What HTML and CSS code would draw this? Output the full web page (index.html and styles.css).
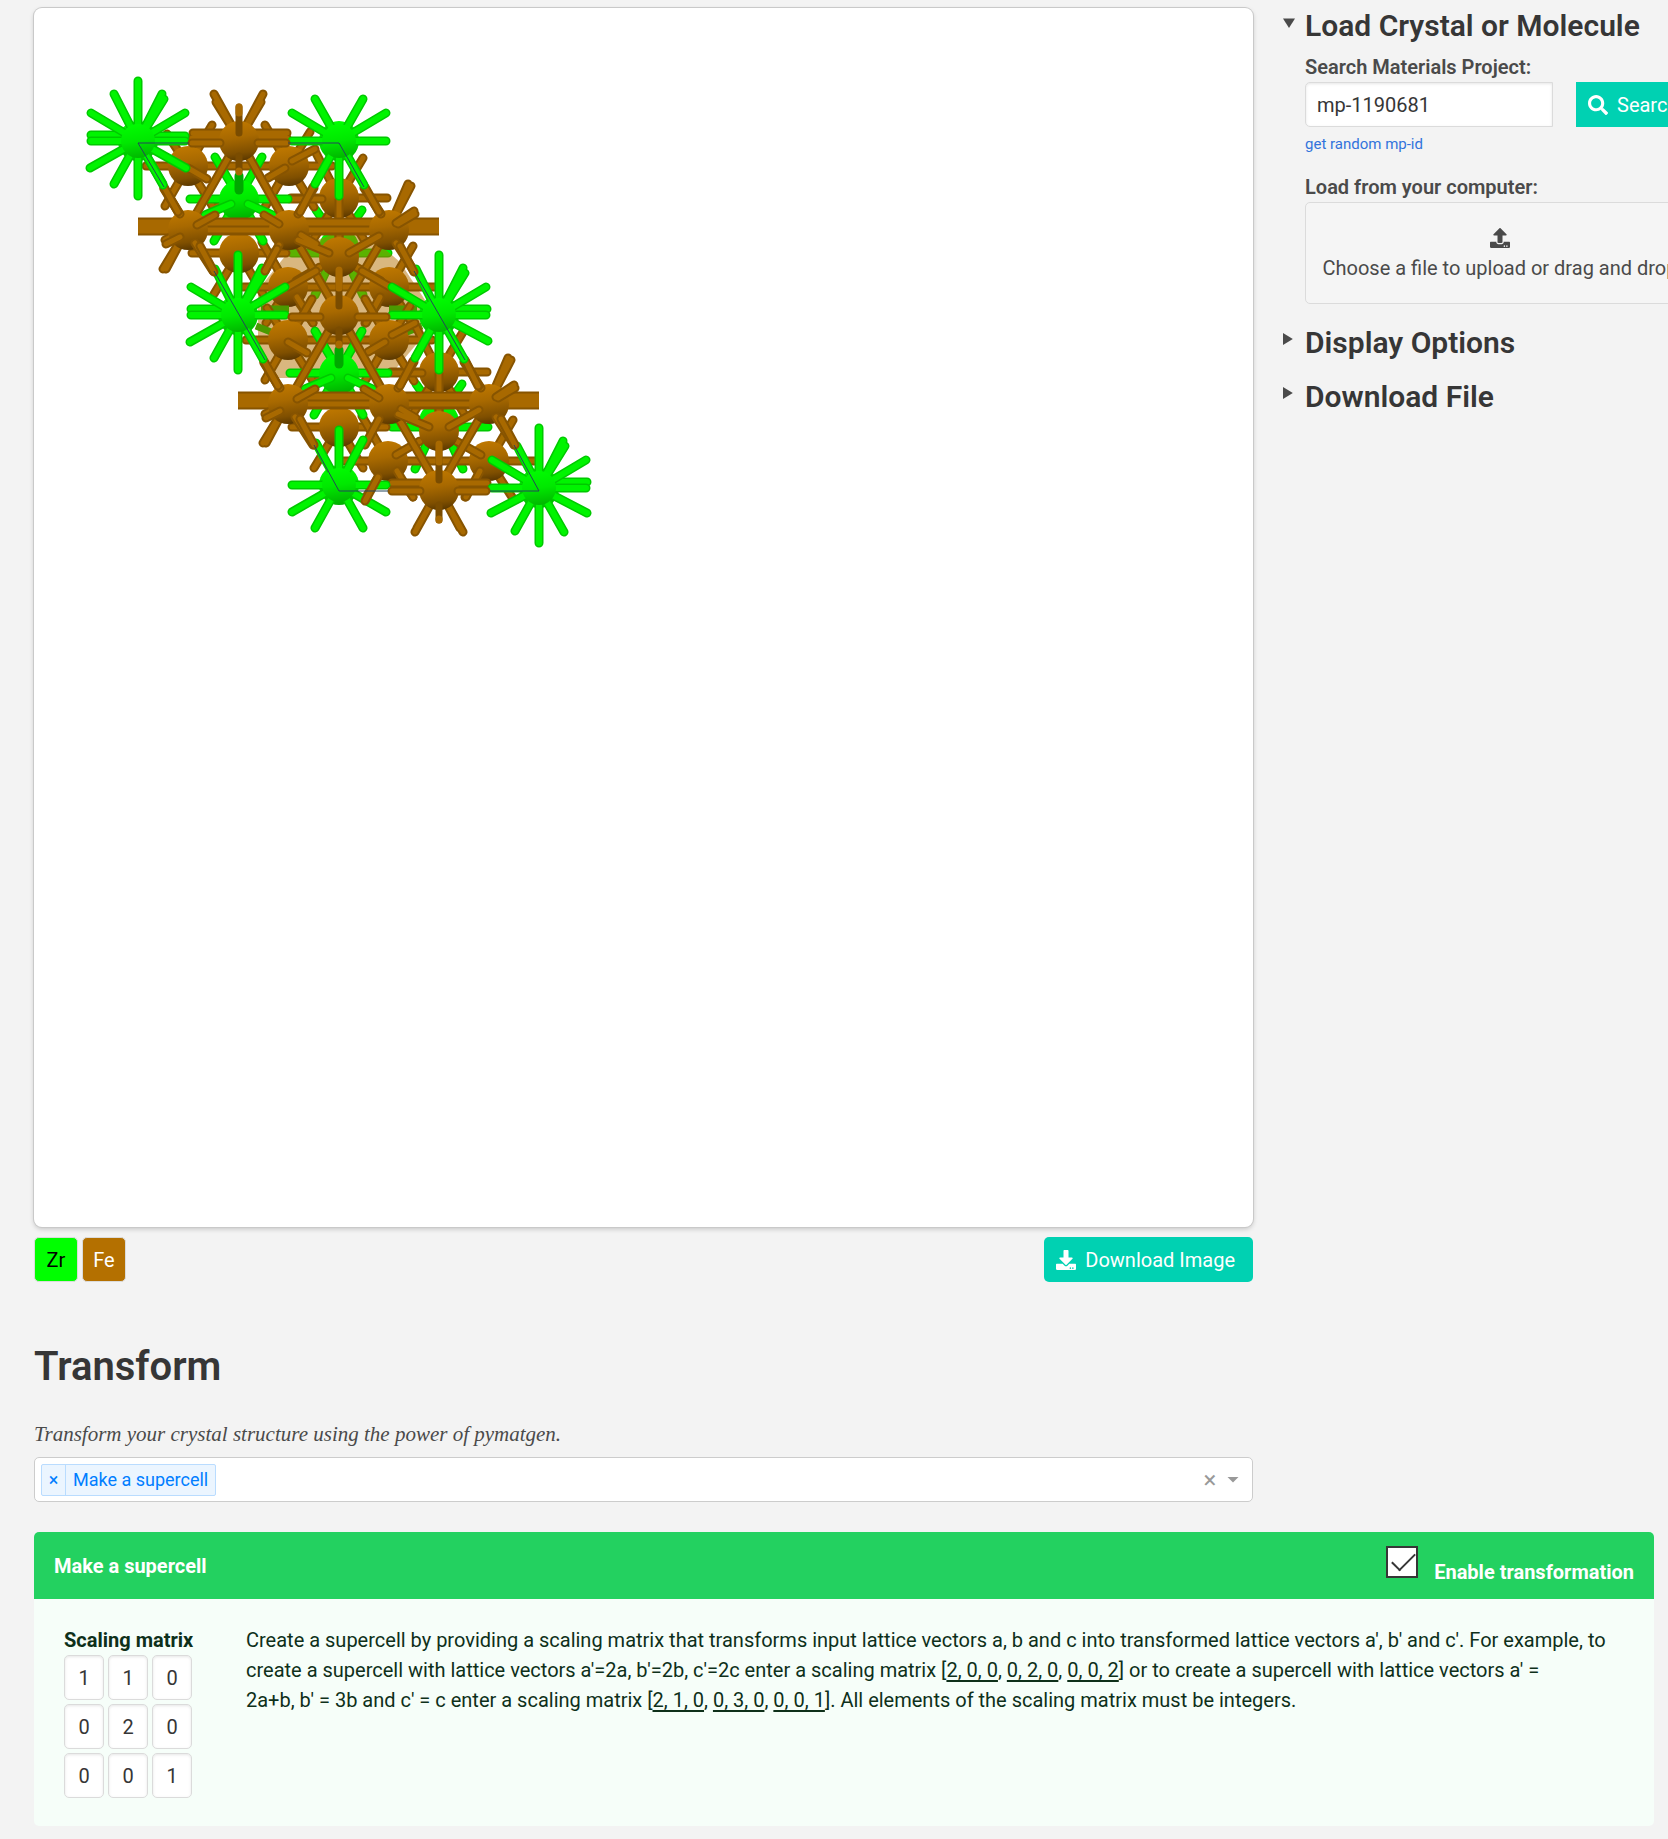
FILE: index.html
```html
<!DOCTYPE html>
<html lang="en">
<head>
<meta charset="utf-8">
<title>Crystal Toolkit</title>
<link rel="stylesheet" href="styles.css">
</head>
<body>
<main class="page">
  <div class="top">
    <section class="primary">
      <div class="viewer">
        <svg class="scene" viewBox="34 8 1219 1219" role="img" aria-label="Crystal structure of a Zr Fe supercell">
          <defs>
            <linearGradient id="feFill" gradientUnits="userSpaceOnUse" x1="-3" y1="-20" x2="3" y2="20">
              <stop offset="0" stop-color="#bf7800"/><stop offset="0.4" stop-color="#a86900"/><stop offset="0.8" stop-color="#7f4f00"/><stop offset="1" stop-color="#593700"/>
            </linearGradient>
            <linearGradient id="zrFill" gradientUnits="userSpaceOnUse" x1="-3" y1="-20" x2="3" y2="20">
              <stop offset="0" stop-color="#00ff00"/><stop offset="0.5" stop-color="#00e800"/><stop offset="1" stop-color="#00ae00"/>
            </linearGradient>
            <circle id="fe" r="20" fill="url(#feFill)"/>
            <circle id="zr" r="20" fill="url(#zrFill)"/>
            <circle id="zrCore" r="17" fill="url(#zrFill)"/>

            <!-- rear layer -->
            <path id="hiddenZr" d="M292 253H388M339 243L316 210M339 243L362 210M339 243L315 295M339 243L363 295"/>
            <path id="rearFe" d="M146 166H332M188 166L212 125M188 166L167 134M188 166L165 206M188 166L213 207M289 166L265 125M289 166L310 132M289 166L265 207M289 166L314 207M339 198H387M339 198H291M339 198L315 151M339 198L363 158M339 198L311 243M339 198L366 243M339 198V238M239 197L213 208M192 253H286M239 253V215M239 253L214 294M239 253L263 294"/>
            <path id="lowerFe" d="M243 287H436M288 287L266 323M288 287L313 323M389 287L365 323M389 287L412 323M288 287L262 242M389 287L413 246"/>
            <path id="lowerStubs" d="M296 281L320 267M381 281L356 267M297 297L313 323M380 297L366 323"/>
            <path id="topStubs" d="M292 161L315 149M285 168L268 178"/>
            <path id="midZr" d="M190 199H288M239 197L215 157M239 197L262 157M239 197L214 241M239 197L263 241"/>
            <path id="midZrFront" d="M205 215L231 204M275 216L248 204"/>
            <path id="midFe" d="M339 200V250M290 199H322"/>

            <!-- front layer -->
            <path id="frontBack" stroke-linecap="butt" d="M138 222H439M138 227H439M138 231H439"/>
            <path id="frontFe" d="M188 228L164 189M188 228L166 269M188 228L163 269M188 228L165 240M239 139L188 228M239 139L289 228M289 228L339 314M389 228L339 314M389 228L411 186M389 228L408 184"/>
            <path id="frontStubs" d="M197 225L215 215M279 224L264 215M301 235L316 244M298 240L329 253M379 236L349 253M180 237L166 244M398 224L415 214M396 223L414 211M195 243L213 271M396 243L414 271M164 188L180 214M364 188L381 214M314 188L298 214M265 271L279 245"/>
            <path id="row" d="M204 230H272M305 230H373"/>

            <!-- arms with an iron-coloured far half -->
            <path id="links" d="M164 187L178 212M365 187L379 212M313 187L300 212M188 168L207 179"/>

            <path id="topFe" d="M239 139L214 94M239 139L216 102M239 139L263 94M239 139L261 102M193 133H287M192 138H287"/>
            <path id="feAxis" d="M-47 0H-19M19 0H47"/>
            <path id="starUp" d="M0 -60V0M0 0L24 -47M0 0L26 -42"/>
            <path id="starArms" d="M0 0L-47 -28M0 0L47 -28M0 0H-47M0 0H47"/>
            <path id="starDown" d="M0 0V55M0 0L-24 43M0 0L25 44"/>
          </defs>

          <g id="cell">
            <use href="#hiddenZr" class="zr-rod"/><use href="#hiddenZr" class="zr-lit"/>
            <use href="#zr" x="339" y="248"/>
          </g>
          <path class="slab" d="M339 232L372 238L400 262L425 300L420 340L388 378H274L258 340L258 290L290 250Z"/>
          <g id="cellBody">
            <use href="#rearFe" class="fe-rod"/><use href="#rearFe" class="fe-lit"/>
            <use href="#fe" x="188" y="166"/><use href="#fe" x="289" y="166"/>
            <use href="#fe" x="339" y="198"/><use href="#fe" x="239" y="253"/>
            <use href="#lowerFe" class="fe-rod"/><use href="#lowerFe" class="fe-lit"/>
            <use href="#fe" x="288" y="287"/><use href="#fe" x="389" y="287"/>
            <use href="#lowerStubs" class="fe-rod"/><use href="#lowerStubs" class="fe-lit"/>
            <use href="#topStubs" class="fe-rod"/><use href="#topStubs" class="fe-lit"/>
            <use href="#midFe" class="fe-rod"/><use href="#midFe" class="fe-lit"/>
            <use href="#midZr" class="zr-rod"/><use href="#midZr" class="zr-lit"/>
            <use href="#zr" x="239" y="200"/>
            <use href="#midZrFront" class="zr-rod"/><use href="#midZrFront" class="zr-lit"/>
            <use href="#frontBack" class="fe-rod"/><use href="#frontBack" class="fe-lit"/>
            <use href="#fe" x="339" y="257"/>
            <use href="#frontFe" class="fe-rod"/><use href="#frontFe" class="fe-lit"/>
            <use href="#row" class="fe-rod"/><use href="#row" class="fe-lit"/>
            <use href="#fe" x="188" y="230"/><use href="#fe" x="289" y="230"/><use href="#fe" x="389" y="230"/>
            <use href="#frontStubs" class="fe-rod"/><use href="#frontStubs" class="fe-lit"/>
            <path class="zr-deep" d="M239 176V190"/>
          </g>
          <path class="zr-dim" d="M256 326L286 338M422 326L392 338M261 309H289M417 309H389"/>

          <!-- second cell, one lattice vector down -->
          <g transform="translate(100 174)">
            <use href="#cell"/>
            <use href="#cellBody"/>
          </g>

          <!-- top row -->
          <use href="#topFe" class="fe-rod"/><use href="#topFe" class="fe-lit"/>
          <use href="#fe" x="239" y="141"/>
          <path class="fe-deep" d="M239 107V133M239 156V171"/>
          <path class="fe-tip" d="M239 107V113M239 171V172"/>
          <use href="#links" class="fe-rod"/><use href="#links" class="fe-lit"/>

          <g transform="translate(138 141)">
            <use href="#zr"/>
            <path class="zr-rod" d="M0 0L-24 -47M0 -6H-47M0 0L48 27M0 0L25 43M0 -5H47M0 0L-48 27"/>
            <path class="zr-lit" d="M0 0L-24 -47M0 -6H-47M0 0L48 27M0 0L25 43M0 -5H47M0 0L-48 27"/>
            <use href="#starUp" class="zr-rod"/><use href="#starUp" class="zr-lit"/>
            <use href="#starArms" class="zr-rod"/><use href="#starArms" class="zr-lit"/>
            <use href="#starDown" class="zr-rod"/><use href="#starDown" class="zr-lit"/>
            <use href="#zrCore"/>
          </g>
          <g transform="translate(339 141)">
            <use href="#zr"/>
            <path class="zr-rod" d="M0 0L-24 -42M0 0L24 -42"/><path class="zr-lit" d="M0 0L-24 -42M0 0L24 -42"/>
            <use href="#starArms" class="zr-rod"/><use href="#starArms" class="zr-lit"/>
            <use href="#starDown" class="zr-rod"/><use href="#starDown" class="zr-lit"/>
            <use href="#zrCore"/>
          </g>
          <use href="#feAxis" x="239" y="143" class="fe-rod"/><use href="#feAxis" x="239" y="143" class="fe-lit"/>

          <!-- middle row -->
          <use href="#fe" x="339" y="315"/>
          <path class="fe-deep" d="M339 270V306M339 330V345"/>
          <path class="fe-tip" d="M339 270V288M339 344V345"/>
          <g transform="translate(100 174)"><use href="#links" class="fe-rod"/><use href="#links" class="fe-lit"/></g>
          <path class="fe-rod" d="M465 360L478 386M288 287L316 271M390 287L362 271"/>
          <path class="fe-lit" d="M465 360L478 386M288 287L316 271M390 287L362 271"/>
          <g transform="translate(238 315)">
            <use href="#zr"/>
            <path class="zr-rod" d="M0 -6H-47M0 0L-48 27M0 0L-23 -46"/><path class="zr-lit" d="M0 -6H-47M0 0L-48 27M0 0L-23 -46"/>
            <use href="#starUp" class="zr-rod"/><use href="#starUp" class="zr-lit"/>
            <use href="#starArms" class="zr-rod"/><use href="#starArms" class="zr-lit"/>
            <use href="#starDown" class="zr-rod"/><use href="#starDown" class="zr-lit"/>
            <use href="#zrCore"/>
          </g>
          <g transform="translate(439 315)">
            <use href="#zr"/>
            <path class="zr-rod" d="M0 -6H48M0 0L49 26M0 0L-23 -46"/><path class="zr-lit" d="M0 -6H48M0 0L49 26M0 0L-23 -46"/>
            <use href="#starUp" class="zr-rod"/><use href="#starUp" class="zr-lit"/>
            <use href="#starArms" class="zr-rod"/><use href="#starArms" class="zr-lit"/>
            <use href="#starDown" class="zr-rod"/><use href="#starDown" class="zr-lit"/>
            <use href="#zrCore"/>
          </g>
          <use href="#feAxis" x="339" y="317" class="fe-rod"/><use href="#feAxis" x="339" y="317" class="fe-lit"/>
          <path class="fe-rod" d="M214 272L200 246M414 272L400 246M265 271L277 249"/>
          <path class="fe-lit" d="M214 272L200 246M414 272L400 246M265 271L277 249"/>

          <!-- bottom row -->
          <path class="fe-rod" d="M392 483H487M439 489L415 532M439 489L417 528M439 489L463 532M439 489L460 528"/>
          <path class="fe-lit" d="M392 483H487M439 489L415 532M439 489L417 528M439 489L463 532M439 489L460 528"/>
          <use href="#fe" x="439" y="490"/>
          <path class="fe-deep" d="M439 444V480M439 505V520"/>
          <path class="fe-tip" d="M439 444V462M439 519V520"/>
          <g transform="translate(339 485)">
            <use href="#zr"/>
            <path class="zr-rod" d="M0 0H-47M0 0H47M0 0L-47 27M0 0L47 27M0 0L-24 43M0 0L24 43M0 0V-55M0 0L-23 -42M0 0L24 -45"/>
            <path class="zr-lit" d="M0 0H-47M0 0H47M0 0L-47 27M0 0L47 27M0 0L-24 43M0 0L24 43M0 0V-55M0 0L-23 -42M0 0L24 -45"/>
            <use href="#zrCore"/>
          </g>
          <path class="fe-rod" d="M378 477L365 501"/><path class="fe-lit" d="M378 477L365 501"/>
          <g transform="translate(539 488)">
            <use href="#zr"/>
            <path class="zr-rod" d="M0 -6H48M0 0L-48 25M0 0L48 25M0 0L-22 -42"/><path class="zr-lit" d="M0 -6H48M0 0L-48 25M0 0L48 25M0 0L-22 -42"/>
            <use href="#starUp" class="zr-rod"/><use href="#starUp" class="zr-lit"/>
            <use href="#starArms" class="zr-rod"/><use href="#starArms" class="zr-lit"/>
            <use href="#starDown" class="zr-rod"/><use href="#starDown" class="zr-lit"/>
            <use href="#zrCore"/>
          </g>
          <use href="#feAxis" x="439" y="491" class="fe-rod"/><use href="#feAxis" x="439" y="491" class="fe-lit"/>
          <path class="fe-rod" d="M314 445L300 419M515 445L501 419"/><path class="fe-lit" d="M314 445L300 419M515 445L501 419"/>

          <path class="wire" d="M138 143H189M138 143L164 187M288 143H339L364 187M214 271L265 360M414 271L465 360M314 445L339 491H388M514 445L539 491H490"/>
        </svg>
      </div>
      <div class="viewer-foot">
        <div class="legend">
          <button class="element element-zr" type="button">Zr</button>
          <button class="element element-fe" type="button">Fe</button>
        </div>
        <button class="button download" type="button">
          <svg class="icon" viewBox="0 0 512 512" aria-hidden="true"><path d="M216 0h80c13 0 24 11 24 24v168h88c18 0 27 22 14 34L270 378c-8 8-20 8-28 0L90 226c-13-13-4-34 14-34h88V24c0-13 11-24 24-24zm296 376v112c0 13-11 24-24 24H24c-13 0-24-11-24-24V376c0-13 11-24 24-24h147l49 49c20 20 52 20 72 0l49-49h147c13 0 24 11 24 24zm-124 88a20 20 0 1 0-40 0 20 20 0 0 0 40 0zm64 0a20 20 0 1 0-40 0 20 20 0 0 0 40 0z"/></svg>
          Download Image
        </button>
      </div>
      <h1 class="title">Transform</h1>
      <p class="lead">Transform your crystal structure using the power of pymatgen.</p>
      <div class="select">
        <span class="tag"><button class="tag-remove" type="button" aria-label="Remove">×</button><span class="tag-text">Make a supercell</span></span>
        <button class="select-clear" type="button" aria-label="Clear all">×</button>
        <button class="select-arrow" type="button" aria-label="Open"></button>
      </div>
    </section>

    <aside class="side">
      <details class="fold" open>
        <summary><h2>Load Crystal or Molecule</h2></summary>
        <div class="fold-body">
          <label class="label" for="mpid">Search Materials Project:</label>
          <div class="search">
            <input class="input search-input" id="mpid" type="text" value="mp-1190681">
            <button class="button search-button" type="button">
              <svg class="icon" viewBox="0 0 512 512" aria-hidden="true"><path d="M505 443L405 343c-4-5-11-7-17-7h-16c28-36 44-80 44-128C416 93 323 0 208 0S0 93 0 208s93 208 208 208c48 0 92-16 128-44v16c0 6 2 12 7 17l100 100c9 9 24 9 34 0l28-28c9-10 9-25 0-34zM208 336c-71 0-128-57-128-128S137 80 208 80s128 57 128 128-57 128-128 128z"/></svg>
              Search
            </button>
          </div>
          <a class="random" href="#random">get random mp-id</a>
          <div class="label">Load from your computer:</div>
          <button class="upload" type="button">
            <svg class="icon" viewBox="0 0 512 512" aria-hidden="true"><path d="M296 384h-80c-13 0-24-11-24-24V192h-88c-18 0-27-22-14-34L242 6c7-8 20-8 28 0l152 152c12 12 4 34-14 34h-88v168c0 13-11 24-24 24zm216-8v112c0 13-11 24-24 24H24c-13 0-24-11-24-24V376c0-13 11-24 24-24h136v8c0 31 25 56 56 56h80c31 0 56-25 56-56v-8h136c13 0 24 11 24 24zm-124 88a20 20 0 1 0-40 0 20 20 0 0 0 40 0zm64 0a20 20 0 1 0-40 0 20 20 0 0 0 40 0z"/></svg>
            <span>Choose a file to upload or drag and drop</span>
          </button>
        </div>
      </details>
      <details class="fold">
        <summary><h2>Display Options</h2></summary>
      </details>
      <details class="fold">
        <summary><h2>Download File</h2></summary>
      </details>
    </aside>
  </div>

  <article class="message">
    <header class="message-head">
      <span>Make a supercell</span>
      <label class="enable"><input type="checkbox" checked><span>Enable transformation</span></label>
    </header>
    <div class="message-body">
      <fieldset class="matrix">
        <legend>Scaling matrix</legend>
        <div class="matrix-grid">
          <input class="input cell" type="text" aria-label="Row 1 column 1" value="1">
          <input class="input cell" type="text" aria-label="Row 1 column 2" value="1">
          <input class="input cell" type="text" aria-label="Row 1 column 3" value="0">
          <input class="input cell" type="text" aria-label="Row 2 column 1" value="0">
          <input class="input cell" type="text" aria-label="Row 2 column 2" value="2">
          <input class="input cell" type="text" aria-label="Row 2 column 3" value="0">
          <input class="input cell" type="text" aria-label="Row 3 column 1" value="0">
          <input class="input cell" type="text" aria-label="Row 3 column 2" value="0">
          <input class="input cell" type="text" aria-label="Row 3 column 3" value="1">
        </div>
      </fieldset>
      <p class="help">Create a supercell by providing a scaling matrix that transforms input lattice vectors a, b and c into transformed lattice vectors a', b' and c'. For example, to create a supercell with lattice vectors a'=2a, b'=2b, c'=2c enter a scaling matrix [<u>2, 0, 0</u>, <u>0, 2, 0</u>, <u>0, 0, 2</u>] or to create a supercell with lattice vectors a' =<br>2a+b, b' = 3b and c' = c enter a scaling matrix [<u>2, 1, 0</u>, <u>0, 3, 0</u>, <u>0, 0, 1</u>]. All elements of the scaling matrix must be integers.</p>
    </div>
  </article>
</main>
</body>
</html>
```
FILE: styles.css
```css
* { box-sizing: border-box; }

body {
  margin: 0;
  background: #f3f3f3;
  color: #4a4a4a;
  font: 20px/30px Roboto, sans-serif;
  overflow-x: hidden;
}

button, input { font: inherit; color: inherit; }
button { cursor: pointer; }
h1, h2, p { margin: 0; }

.page { padding: 8px 14px 13px 34px; }

.top {
  display: grid;
  grid-template-columns: minmax(0, 1fr) 370px;
  gap: 31px;
}

/* Structure viewer */
.viewer {
  aspect-ratio: 1;
  background: #fff;
  border-radius: 8px;
  box-shadow: 0 0 0 1px #c9c9c9, 0 2px 5px rgba(0, 0, 0, .2);
}
.scene { display: block; width: 100%; }

.fe-rod, .zr-rod, .fe-lit, .zr-lit, .fe-deep, .zr-deep, .fe-tip {
  fill: none;
  stroke-width: 9;
  stroke-linecap: round;
}
.fe-rod { stroke: #875400; }
.fe-lit { stroke: #a86900; stroke-width: 5; }
.zr-rod { stroke: #00c800; }
.zr-lit { stroke: #00f400; stroke-width: 6; }
.fe-deep { stroke: #7a4c00; stroke-width: 7; }
.fe-tip { stroke: #a86900; stroke-width: 7; }
.zr-deep { stroke: #00a800; }
.zr-dim { fill: none; stroke: #4a9a00; stroke-width: 7; }
.slab { fill: #b47000; opacity: .5; }
.wire { fill: none; stroke: #24455a; stroke-width: 1; }

.viewer-foot {
  display: flex;
  justify-content: space-between;
  margin-top: 10px;
}
.legend { display: flex; gap: 4px; }
.element {
  width: 44px;
  height: 45px;
  padding: 0;
  border: 1px solid #dbdbdb;
  border-radius: 5px;
}
.element-zr { background: #0f0; color: #000; }
.element-fe { background: #b47000; color: #fff; }

.button {
  display: inline-flex;
  align-items: center;
  gap: 9px;
  height: 45px;
  padding: 0 18px 0 12px;
  border: 0;
  border-radius: 5px;
  background: #00d1b2;
  color: #fff;
}
.icon { width: 20px; height: 20px; fill: currentColor; }

/* Transform chooser */
.title {
  margin-top: 61px;
  color: #363636;
  font-size: 40px;
  line-height: 48px;
  font-weight: 600;
}
.lead {
  margin-top: 28px;
  font: italic 21px/30px "Liberation Serif", serif;
}
.select {
  display: flex;
  align-items: center;
  height: 45px;
  margin-top: 8px;
  padding: 0 13px 0 6px;
  border: 1px solid #ccc;
  border-radius: 5px;
  background: #fff;
}
.tag {
  display: flex;
  height: 32px;
  margin-right: auto;
  border: 1px solid #b9dcff;
  border-radius: 2px;
  background: #ebf5ff;
  color: #007eff;
  font-size: 18px;
}
.tag-remove {
  width: 24px;
  padding: 0;
  border: 0;
  border-right: 1px solid #b9dcff;
  background: none;
}
.tag-text { padding: 0 7px; }
.select-clear {
  width: 20px;
  padding: 0;
  border: 0;
  background: none;
  color: #999;
  font-size: 24px;
}
.select-arrow {
  width: 12px;
  height: 6px;
  margin-left: 7px;
  padding: 0;
  border: 0;
  background: #999;
  clip-path: polygon(0 0, 100% 0, 50% 100%);
}

/* Side panel */
.side { display: flex; flex-direction: column; gap: 18px; }
.fold summary {
  display: flex;
  align-items: flex-start;
  list-style: none;
  cursor: pointer;
}
.fold summary::before {
  content: "";
  width: 12px;
  height: 12px;
  margin: 8px 10px 0 -1px;
  background: #4a4a4a;
  clip-path: polygon(0 0, 82% 50%, 0 100%);
}
.fold[open] summary::before { clip-path: polygon(0 20%, 100% 20%, 50% 100%); }
.fold h2 {
  color: #363636;
  font-size: 30px;
  line-height: 36px;
  font-weight: 600;
  white-space: nowrap;
}
.fold-body { width: 390px; margin-left: 21px; padding: 8px 0 3px; }
.label {
  display: block;
  font-weight: 600;
}
.input {
  height: 45px;
  padding: 0 11px;
  border: 1px solid #dbdbdb;
  border-radius: 5px;
  background: #fff;
  color: #363636;
  box-shadow: inset 0 1px 3px rgba(10, 10, 10, .1);
}
.search { display: flex; gap: 23px; }
.search-input { width: 248px; border-radius: 5px 0 0 5px; }
.search-button { flex: 1; border-radius: 0 5px 5px 0; }
.random {
  display: block;
  margin: 2px 0 13px;
  color: #3273dc;
  font-size: 15px;
  text-decoration: none;
}
.upload {
  display: flex;
  flex-direction: column;
  align-items: center;
  gap: 5px;
  width: 100%;
  height: 102px;
  padding: 25px 0 0;
  border: 1px solid #dbdbdb;
  border-radius: 5px;
  background: #f5f5f5;
  white-space: nowrap;
}

/* Transformation settings */
.message {
  margin-top: 30px;
  border-radius: 5px;
  overflow: hidden;
  background: #f6fef9;
  color: #0e301a;
}
.message-head {
  display: flex;
  align-items: center;
  justify-content: space-between;
  height: 67px;
  padding: 0 20px;
  background: #23d160;
  color: #fff;
  font-weight: 700;
}
.enable { display: flex; align-items: flex-end; gap: 16px; margin-bottom: 4px; }
.enable span { line-height: 20px; }
.enable input {
  appearance: none;
  width: 32px;
  height: 32px;
  margin: 0 0 4px;
  border: 2px solid #363636;
  background: #fff;
}
.enable input:checked::before {
  content: "";
  display: block;
  width: 21px;
  height: 10px;
  margin: 5px 0 0 4px;
  border: solid #363636;
  border-width: 0 0 2px 2px;
  transform: rotate(-45deg);
}
.message-body {
  display: flex;
  gap: 50px;
  padding: 26px 30px 28px;
}
.matrix { width: 132px; margin: 0; padding: 0; border: 0; flex: none; }
.matrix legend { padding: 0; font-weight: 700; white-space: nowrap; }
.matrix-grid {
  display: grid;
  grid-template-columns: repeat(3, 40px);
  gap: 4px;
}
.cell { width: 40px; padding: 0; text-align: center; }
.help { flex: 1; }
.help u { text-underline-offset: 3px; }
```
